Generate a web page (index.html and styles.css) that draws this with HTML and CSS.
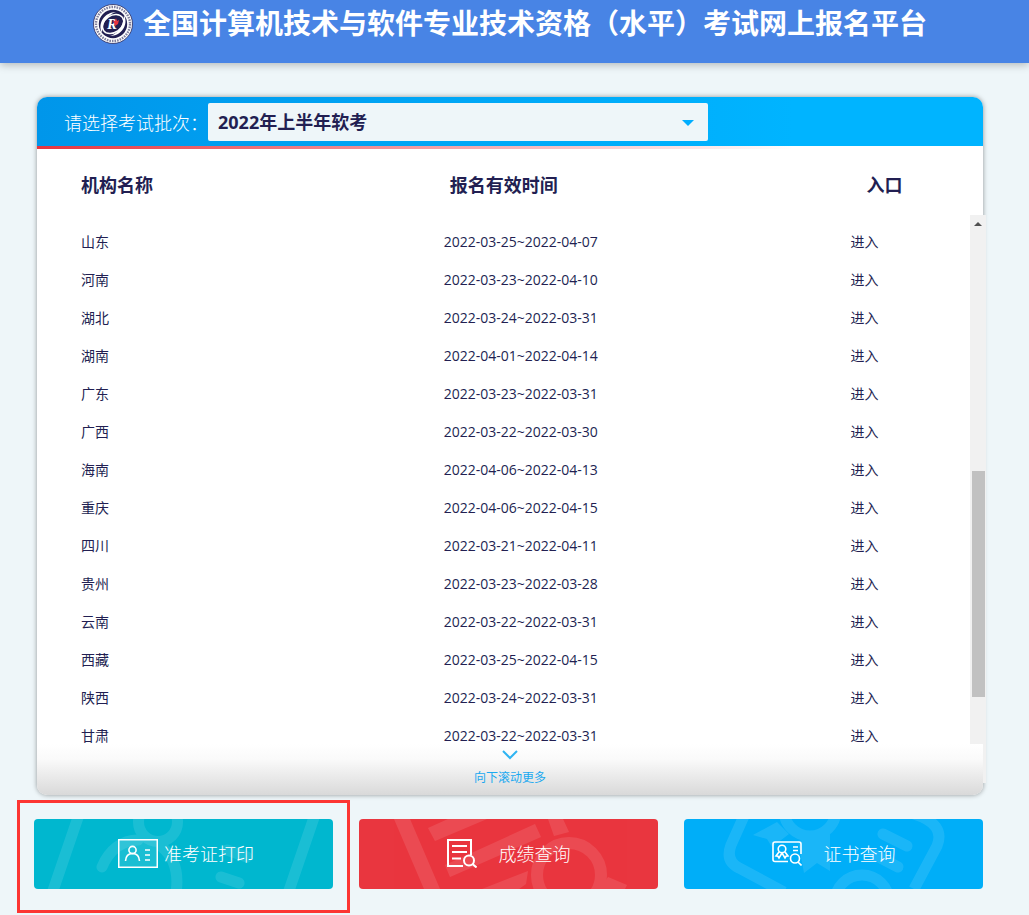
FILE: index.html
```html
<!DOCTYPE html>
<html lang="zh-CN">
  <head>
    <meta charset="UTF-8" />
    <meta name="viewport" content="width=device-width, initial-scale=1.0" />
    <title>全国计算机技术与软件专业技术资格（水平）考试网上报名平台</title>
    <link rel="stylesheet" href="styles.css">
  </head>
  <body>
    <header class="top-bar">
      <svg class="logo" viewBox="0 0 40 40" aria-hidden="true">
        <circle cx="20" cy="20" r="19.5" fill="#fff" stroke="#2b2a5c" stroke-width="0.8" />
        <circle cx="20" cy="20" r="17" fill="none" stroke="#2b2a5c" stroke-width="2.4" stroke-dasharray="1.6 1" opacity="0.6" />
        <circle cx="20" cy="20" r="14.2" fill="#221f52" />
        <ellipse cx="20" cy="20" rx="11.5" ry="8.5" transform="rotate(-35 20 20)" fill="none" stroke="#fff" stroke-width="1.5" />
        <path d="M31 11C36 21 28 32 17 32C26 29 31 21 31 11Z" fill="#fff" />
        <path d="M9 29C4 19 12 8 23 8C14 11 9 19 9 29Z" fill="#fff" />
        <text class="logo-letter" x="14" y="25">R</text>
        <path d="M20 16l2 1 1-3 1 3 2-1-1 4-3 2z" fill="#e7343f" />
      </svg>
      <h1>全国计算机技术与软件专业技术资格（水平）考试网上报名平台</h1>
    </header>

    <main>
      <section class="card">
        <div class="card-head">
          <label for="batch">请选择考试批次：</label>
          <div class="select-box">
            <select id="batch">
              <option>2022年上半年软考</option>
            </select>
          </div>
        </div>

        <table>
          <thead>
            <tr>
              <th class="name">机构名称</th>
              <th class="time">报名有效时间</th>
              <th class="entry">入口</th>
            </tr>
          </thead>
          <tbody>
            <tr><td>山东</td><td>2022-03-25~2022-04-07</td><td><a href="#">进入</a></td></tr>
            <tr><td>河南</td><td>2022-03-23~2022-04-10</td><td><a href="#">进入</a></td></tr>
            <tr><td>湖北</td><td>2022-03-24~2022-03-31</td><td><a href="#">进入</a></td></tr>
            <tr><td>湖南</td><td>2022-04-01~2022-04-14</td><td><a href="#">进入</a></td></tr>
            <tr><td>广东</td><td>2022-03-23~2022-03-31</td><td><a href="#">进入</a></td></tr>
            <tr><td>广西</td><td>2022-03-22~2022-03-30</td><td><a href="#">进入</a></td></tr>
            <tr><td>海南</td><td>2022-04-06~2022-04-13</td><td><a href="#">进入</a></td></tr>
            <tr><td>重庆</td><td>2022-04-06~2022-04-15</td><td><a href="#">进入</a></td></tr>
            <tr><td>四川</td><td>2022-03-21~2022-04-11</td><td><a href="#">进入</a></td></tr>
            <tr><td>贵州</td><td>2022-03-23~2022-03-28</td><td><a href="#">进入</a></td></tr>
            <tr><td>云南</td><td>2022-03-22~2022-03-31</td><td><a href="#">进入</a></td></tr>
            <tr><td>西藏</td><td>2022-03-25~2022-04-15</td><td><a href="#">进入</a></td></tr>
            <tr><td>陕西</td><td>2022-03-24~2022-03-31</td><td><a href="#">进入</a></td></tr>
            <tr><td>甘肃</td><td>2022-03-22~2022-03-31</td><td><a href="#">进入</a></td></tr>
          </tbody>
        </table>

        <!-- Scroll bar of the list -->
        <div class="scroll-track">
          <div class="scroll-arrow"></div>
          <div class="scroll-thumb"></div>
        </div>

        <div class="more">
          <svg width="16" height="10" viewBox="0 0 16 10" aria-hidden="true">
            <path d="M1 1l7 7 7-7" fill="none" stroke="#2fb4f2" stroke-width="2" />
          </svg>
          <span>向下滚动更多</span>
        </div>
      </section>

      <!-- Bottom links -->
      <nav class="links">
        <div class="link-item marked">
          <a class="link-btn print" href="#">
            <svg class="pattern" width="299" height="70" viewBox="0 0 299 70" aria-hidden="true">
              <g fill="none" stroke="#fff" stroke-width="11">
                <path d="M44.500-3L18.500 73M280.500-3L254.500 73" />
                <circle cx="124" cy="3" r="19.500" />
                <path d="M68 48C75 31 88 21 104 21M128 28C140 38 145 54 142 74M187 58l18 6M193 31l20 7" stroke-linecap="round" />
              </g>
            </svg>
            <svg class="icon" width="40" height="29" viewBox="0 0 40 29" aria-hidden="true">
              <rect x="0.750" y="0.750" width="38.500" height="27.500" fill="#fff" fill-opacity="0.1" stroke="#fff" stroke-width="1.500" />
              <g fill="none" stroke="#fff" stroke-width="1.600">
                <circle cx="14.500" cy="11" r="3.600" />
                <path d="M7.500 22c.3-5 3-7.500 7-7.500s6.700 2.500 7 7.500M27 11h5M27 16h5M27 21h5" />
              </g>
            </svg>
            <span>准考证打印</span>
          </a>
        </div>
        <div class="link-item">
          <a class="link-btn score" href="#">
            <svg class="pattern" width="299" height="70" viewBox="0 0 299 70" aria-hidden="true">
              <path d="M35 0h16l30 70H65zM69 9L89 0h39L76 22zM86 46L176 5l6 13L91 58zM123 70l46-18-2 13-7 5zM189 0h15l6 13-15 4zM249 58l19 8-2 4h-25z" fill="#fff" />
              <circle cx="210" cy="56" r="32" fill="none" stroke="#fff" stroke-width="12" />
            </svg>
            <svg class="icon" width="30" height="29" viewBox="0 0 30 29" aria-hidden="true">
              <g fill="none" stroke="#fff" stroke-width="2">
                <path d="M16 27H1V1h23v15M5 7h15M5 13h15M5 19.500h9" />
                <circle cx="22" cy="21.500" r="5" />
                <path d="M25.500 25l4 3.500" />
              </g>
            </svg>
            <span>成绩查询</span>
          </a>
        </div>
        <div class="link-item">
          <a class="link-btn cert" href="#">
            <svg class="pattern" width="299" height="70" viewBox="0 0 299 70" aria-hidden="true">
              <g fill="none" stroke="#fff" stroke-width="11">
                <path d="M60-3L47 26Q41 42 55 49L100 73M230-5Q262 5 253 27L230 70" />
                <circle cx="126" cy="-9" r="26" />
                <circle cx="178" cy="83" r="27" />
                <path d="M199 15l24 12M191 36l23 12" stroke-linecap="round" />
              </g>
              <path d="M69 16L93 3l12 12-17 13-5-8zM114 22l32-7v37l-13-8-13 10z" fill="#fff" />
            </svg>
            <svg class="icon" width="30" height="25" viewBox="0 0 30 25" aria-hidden="true">
              <g fill="none" stroke="#fff" stroke-width="1.600">
                <path d="M16 20.500H3a2 2 0 0 1-2-2V3a2 2 0 0 1 2-2h24a2 2 0 0 1 2 2v10M21 6h5M21 9.500h5" />
                <circle cx="10" cy="8" r="3.800" />
                <path d="M7 11l-3 4 2 .3 1 1.700 3-5 3 5 1-1.700 2-.3-3-4" />
                <circle cx="23" cy="17.500" r="4.500" />
                <path d="M26 21l3.500 3.500" />
              </g>
            </svg>
            <span>证书查询</span>
          </a>
        </div>
      </nav>
    </main>
  </body>
</html>
```

FILE: styles.css
```css
* {
  box-sizing: border-box;
}

body {
  margin: 0;
  background-color: #eef6f9;
  color: #221f52;
  font-family: "Open Sans", "Noto Sans CJK SC", sans-serif;
  font-size: 14px;
}

a {
  color: inherit;
  text-decoration: none;
}

/* Header */
.top-bar {
  display: flex;
  justify-content: center;
  gap: 10px;
  height: 63px;
  padding: 4px 9px 0 0;
  background-color: #4884e5;
  box-shadow: 0 2px 8px rgba(0, 0, 0, 0.25);
}

.logo {
  width: 40px;
  height: 40px;
  flex: none;
}

.logo-letter {
  fill: #fff;
  font: italic bold 15px "Liberation Serif", serif;
}

.top-bar h1 {
  margin: 0;
  color: #fff;
  font-size: 28px;
  line-height: 38px;
  white-space: nowrap;
}

main {
  padding: 34px 46px 26px 34px;
}

/* Exam list */
.card {
  position: relative;
  margin-left: 3px;
  background-color: #fff;
  border-radius: 10px;
  box-shadow: 0 0 5px rgba(0, 0, 0, 0.4);
}

.card-head {
  display: flex;
  align-items: center;
  height: 52px;
  padding-left: 27px;
  border-bottom: 3px solid;
  border-image: linear-gradient(to right, #e7343f, #fff 80%) 1;
  background: linear-gradient(to right, #0096ea, #00b4ff 80%);
  background-clip: padding-box;
  clip-path: inset(0 round 10px 10px 0 0);
}

.card-head label {
  color: #fff;
  font-size: 18px;
  font-weight: 300;
  white-space: nowrap;
}

.select-box {
  position: relative;
  width: 500px;
}

/* Drop-down triangle */
.select-box::after {
  content: "";
  position: absolute;
  top: 17px;
  right: 14px;
  border: 6px solid transparent;
  border-top-color: #00aeff;
  border-bottom: none;
  pointer-events: none;
}

.select-box select {
  display: block;
  width: 100%;
  height: 38px;
  padding: 0 10px;
  appearance: none;
  border: none;
  border-radius: 2px;
  background-color: #eef6f9;
  color: #221f52;
  font-family: inherit;
  font-size: 18px;
  font-weight: bold;
}

table {
  width: 100%;
  table-layout: fixed;
  border-collapse: collapse;
  text-align: left;
}

th {
  height: 73px;
  padding: 0 0 3px;
  font-size: 18px;
}

th.name {
  width: 43%;
  padding-left: 44px;
}

th.time {
  width: 43%;
  padding-left: 6px;
}

th.entry {
  padding-left: 16px;
}

td {
  height: 38px;
  padding: 0;
}

td:first-child {
  padding-left: 44px;
}

.scroll-track {
  position: absolute;
  top: 118px;
  right: -3px;
  bottom: 12px;
  width: 16px;
  background-color: #f1f1f1;
}

.scroll-arrow {
  width: 8px;
  margin: 7px 4px 0;
  border: 4px solid transparent;
  border-top: none;
  border-bottom-color: #505050;
}

.scroll-thumb {
  height: 226px;
  margin: 245px 1px 0 2px;
  background-color: #c1c1c1;
}

.more {
  position: relative;
  display: flex;
  flex-direction: column;
  align-items: center;
  gap: 9px;
  height: 51px;
  margin-top: -10px;
  padding-top: 6px;
  border-radius: 0 0 10px 10px;
  background: linear-gradient(#fff, #fafafa 30%, #d9d9d9);
  color: #1ba9f0;
  font-size: 12px;
  line-height: 18px;
}

/* Bottom links */
.links {
  display: grid;
  grid-template-columns: repeat(3, 1fr);
  gap: 26px;
  margin-top: 24px;
}

.link-item {
  position: relative;
}

/* Red frame round the ticket button */
.marked::after {
  content: "";
  position: absolute;
  inset: -19px -17px -24px;
  border: 3px solid #fc3532;
  pointer-events: none;
}

.link-btn {
  position: relative;
  display: flex;
  align-items: center;
  justify-content: center;
  gap: 22px;
  height: 70px;
  padding-bottom: 2px;
  overflow: hidden;
  border-radius: 4px;
  color: #fff;
  font-size: 18px;
  font-weight: 300;
}

.link-btn .icon,
.link-btn span {
  position: relative;
}

.pattern {
  position: absolute;
  top: 0;
  left: 0;
  opacity: 0.1;
}

.print {
  gap: 6px;
  padding-left: 5px;
  background-color: #00b7d0;
}

.score {
  background-color: #e9363f;
}

.cert {
  background-color: #00aef8;
}
```
